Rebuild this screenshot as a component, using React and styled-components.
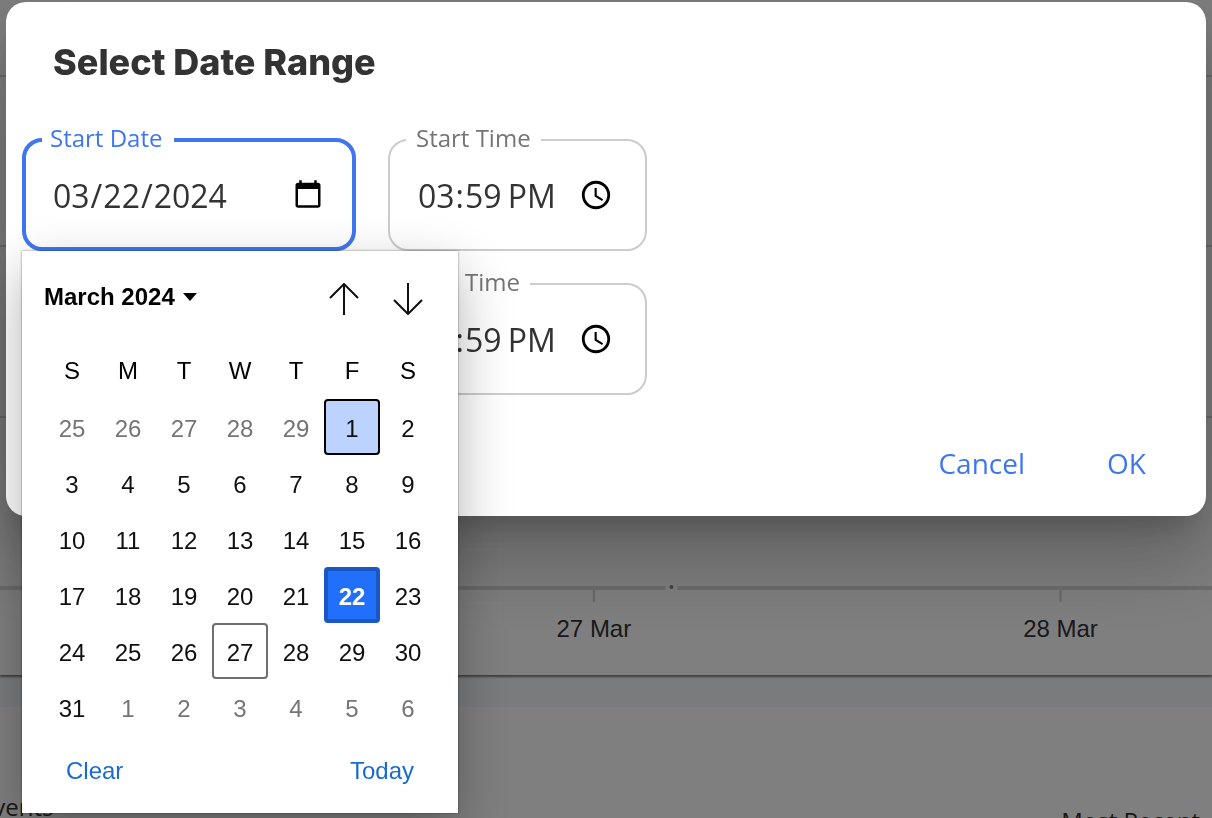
import React from "react";
import styled, { createGlobalStyle } from "styled-components";

const DAY_NAMES = ["S", "M", "T", "W", "T", "F", "S"];

// Grid starts on Sunday, February 25 2024
const WEEKS = [0, 1, 2, 3, 4, 5].map((week) =>
  [0, 1, 2, 3, 4, 5, 6].map((day) => {
    const date = new Date(2024, 1, 25 + week * 7 + day);
    return { day: date.getDate(), outside: date.getMonth() !== 2 };
  })
);

const getState = ({ day, outside }) => {
  if (outside) return "outside";
  if (day === 1) return "hovered";
  if (day === 22) return "selected";
  if (day === 27) return "today";
  return "normal";
};

function DateTimeField({ id, label, type, value, active, children }) {
  return (
    <FieldSlot $type={type}>
      <Outline $active={active}>
        <Legend $active={active}>
          <label htmlFor={id}>{label}</label>
        </Legend>
        <Input id={id} type={type} defaultValue={value} />
      </Outline>
      {children}
    </FieldSlot>
  );
}

function Calendar() {
  return (
    <CalendarPopup>
      <CalendarHeader>
        <MonthButton type="button">
          March 2024
          <svg width="14" height="8" viewBox="0 0 14 8" aria-hidden="true">
            <path d="M0 0h14L7 8z" fill="#000" />
          </svg>
        </MonthButton>
        <Arrows>
          <ArrowButton type="button" aria-label="Previous month">
            <svg width="32" height="32" viewBox="0 0 32 32" aria-hidden="true">
              <path d="M16 32V1M2 15L16 1l14 14" />
            </svg>
          </ArrowButton>
          <ArrowButton type="button" aria-label="Next month">
            <svg width="32" height="32" viewBox="0 0 32 32" aria-hidden="true">
              <path d="M16 0v31M2 17l14 14 14-14" />
            </svg>
          </ArrowButton>
        </Arrows>
      </CalendarHeader>
      <MonthTable>
        <thead>
          <tr>
            {DAY_NAMES.map((name, i) => (
              <th key={i}>{name}</th>
            ))}
          </tr>
        </thead>
        <tbody>
          {WEEKS.map((week, i) => (
            <tr key={i}>
              {week.map((cell, j) => (
                <td key={j}>
                  <DayButton type="button" $state={getState(cell)}>
                    {cell.day}
                  </DayButton>
                </td>
              ))}
            </tr>
          ))}
        </tbody>
      </MonthTable>
      <CalendarFooter>
        <TextButton type="button">Clear</TextButton>
        <TextButton type="button">Today</TextButton>
      </CalendarFooter>
    </CalendarPopup>
  );
}

function Dashboard() {
  return (
    <Page>
      <ChartPanel>
        <Chart>
          <g stroke="#d8d8d8" strokeWidth="2">
            <line x1="0" x2="100%" y1="76" y2="76" />
            <line x1="0" x2="100%" y1="246" y2="246" />
            <line x1="0" x2="100%" y1="417" y2="417" />
          </g>
          <line x1="0" x2="100%" y1="588" y2="588" stroke="#dadada" strokeWidth="4" />
          <g stroke="#cfcfcf" strokeWidth="2">
            <line x1="49%" x2="49%" y1="590" y2="602" />
            <line x1="87.5%" x2="87.5%" y1="590" y2="602" />
          </g>
          <circle cx="55.4%" cy="588" r="6" fill="#fff" />
          <circle cx="55.4%" cy="587" r="2" fill="#9a7aa5" />
          <text x="49%" y="637">
            27 Mar
          </text>
          <text x="87.5%" y="637">
            28 Mar
          </text>
        </Chart>
      </ChartPanel>
      <EventsPanel>
        <EventsTitle>Events</EventsTitle>
        <SortLabel>Most Recent</SortLabel>
      </EventsPanel>
    </Page>
  );
}

function App() {
  return (
    <>
      <GlobalStyle />
      <Dashboard />
      <Backdrop>
        <Dialog role="dialog" aria-labelledby="dialog-title">
          <Title id="dialog-title">Select Date Range</Title>
          <Fields>
            <FieldRow>
              <DateTimeField
                id="start-date"
                label="Start Date"
                type="date"
                value="2024-03-22"
                active
              >
                <Calendar />
              </DateTimeField>
              <DateTimeField
                id="start-time"
                label="Start Time"
                type="time"
                value="15:59"
              />
            </FieldRow>
            <FieldRow>
              <DateTimeField
                id="end-date"
                label="End Date"
                type="date"
                value="2024-03-27"
              />
              <DateTimeField
                id="end-time"
                label="End Time"
                type="time"
                value="15:59"
              />
            </FieldRow>
          </Fields>
          <Actions>
            <ActionButton type="button">Cancel</ActionButton>
            <ActionButton type="button">OK</ActionButton>
          </Actions>
        </Dialog>
      </Backdrop>
    </>
  );
}

export default App;

const GlobalStyle = createGlobalStyle`
  * {
    box-sizing: border-box;
  }
  body {
    margin: 0;
    font-family: "Open Sans", sans-serif;
    background: #f3f7fb;
  }
  button {
    padding: 0;
    border: none;
    background: none;
    cursor: pointer;
  }
`;

const Page = styled.main`
  display: flex;
  flex-direction: column;
  gap: 32px;
  height: 100vh;
  overflow: hidden;
`;
const ChartPanel = styled.section`
  flex-shrink: 0;
  background: #fff;
  box-shadow: 0 2px 2px rgba(0, 0, 0, 0.5);
`;
const Chart = styled.svg`
  display: block;
  width: 100%;
  height: 675px;
  text {
    font-family: "Liberation Sans", sans-serif;
    font-size: 24px;
    text-anchor: middle;
    fill: #333;
  }
`;
const EventsPanel = styled.section`
  display: flex;
  flex-shrink: 0;
  justify-content: space-between;
  padding: 84px 12px 0 0;
  background: #fff;
  color: #333;
  font-size: 24px;
  line-height: 32px;
`;
const EventsTitle = styled.div`
  margin-left: -20px;
`;
const SortLabel = styled.div`
  padding-top: 14px;
`;

const Backdrop = styled.div`
  position: fixed;
  inset: 0;
  padding: 2px 6px;
  background: rgba(0, 0, 0, 0.5);
`;
const Dialog = styled.section`
  padding: 36px 16px 33px;
  border-radius: 20px;
  background: #fff;
  box-shadow: 0 22px 30px -14px rgba(0, 0, 0, 0.2),
    0 48px 76px 6px rgba(0, 0, 0, 0.14), 0 18px 92px 16px rgba(0, 0, 0, 0.12);
`;
const Title = styled.h2`
  margin: 0 31px 38px;
  color: #333;
  font-family: Inter, sans-serif;
  font-size: 36px;
  font-weight: 800;
  line-height: 48px;
`;
const Fields = styled.div`
  display: flex;
  flex-direction: column;
  gap: 17px;
`;
const FieldRow = styled.div`
  display: flex;
  gap: 32px;
`;
const FieldSlot = styled.div`
  position: relative;
  width: ${({ $type }) => ($type === "date" ? "334px" : "259px")};
`;
const Outline = styled.fieldset`
  height: 127px;
  margin: 0;
  padding: 0 16px;
  border: ${({ $active }) => ($active ? "4px solid #3f76f0" : "2px solid #ccc")};
  border-radius: 20px;
`;
const Legend = styled.legend`
  padding: ${({ $active }) => ($active ? "0 12px 4px 8px" : "0 10px 4px")};
  color: ${({ $active }) => ($active ? "#3f76f0" : "#757575")};
  font-size: 24px;
  line-height: 28px;
`;
const Input = styled.input`
  display: block;
  width: 100%;
  height: 78px;
  padding: ${({ type }) => (type === "time" ? "0 13px 0 11px" : "0 10px")};
  border: none;
  outline: none;
  background: transparent;
  color: #333;
  font-family: "Open Sans", sans-serif;
  font-size: 32px;
`;

const CalendarPopup = styled.div`
  position: absolute;
  z-index: 1;
  top: 100%;
  left: 0;
  width: 436px;
  padding: 20px 22px 28px;
  background: #fff;
  box-shadow: 0 0 2px rgba(0, 0, 0, 0.5), 0 20px 50px rgba(0, 0, 0, 0.3);
  font-family: "Liberation Sans", sans-serif;
`;
const CalendarHeader = styled.div`
  display: flex;
  align-items: center;
  justify-content: space-between;
  height: 56px;
`;
const MonthButton = styled.button`
  display: flex;
  align-items: center;
  gap: 8px;
  color: #000;
  font-family: inherit;
  font-size: 24px;
  font-weight: 700;
  && {
    padding-bottom: 4px;
  }
`;
const Arrows = styled.div`
  display: flex;
  gap: 32px;
  padding-right: 12px;
`;
const ArrowButton = styled.button`
  display: flex;
  svg {
    fill: none;
    stroke: #101010;
    stroke-width: 2;
  }
`;
const MonthTable = styled.table`
  width: 100%;
  border-collapse: collapse;
  table-layout: fixed;
  th {
    height: 72px;
    padding: 16px 0 0;
    font-size: 24px;
    font-weight: 400;
  }
  td {
    height: 56px;
    padding: 0;
  }
`;

const dayStyles = {
  normal: "color: #101010;",
  outside: "color: #757575;",
  hovered: "color: #101010; background: #bcd3ff; border: 2px solid #000;",
  selected:
    "color: #fff; background: #216ffb; border: 4px solid #1a56c4; font-weight: 700;",
  today: "color: #101010; border: 2px solid #6e6e6e;",
};
const DayButton = styled.button`
  display: block;
  width: 100%;
  height: 56px;
  border-radius: 4px;
  font-family: inherit;
  font-size: 24px;
  && {
    padding-top: 4px;
    ${({ $state }) => dayStyles[$state]}
  }
`;
const CalendarFooter = styled.div`
  display: flex;
  justify-content: space-between;
  padding: 22px 22px 0;
`;
const TextButton = styled.button`
  color: #1a6bcf;
  font-family: inherit;
  font-size: 24px;
  line-height: 28px;
`;

const Actions = styled.div`
  display: flex;
  justify-content: flex-end;
  gap: 82px;
  padding: 48px 44px 0;
`;
const ActionButton = styled.button`
  color: #3f76f0;
  font-family: inherit;
  font-size: 28px;
  line-height: 40px;
`;
